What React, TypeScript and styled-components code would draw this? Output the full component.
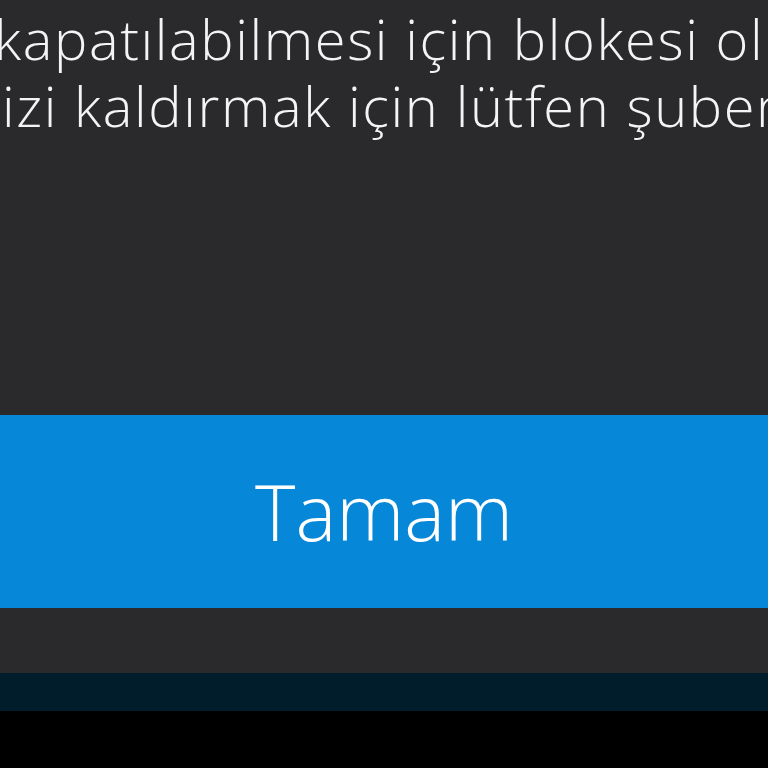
import React from "react";
import styled, { createGlobalStyle } from "styled-components";

const Global = createGlobalStyle`
  html, body { margin: 0; padding: 0; background: #000; overflow: hidden; }
  #root { width: 768px; height: 768px; }
`;

const Screen = styled.div`
  width: 768px;
  height: 768px;
  display: flex;
  flex-direction: column;
  background: #000;
  overflow: hidden;
  font-family: "Open Sans", "Noto Sans", sans-serif;
`;

const Dialog = styled.div`
  background: #2a292b;
  display: flex;
  flex-direction: column;
`;

const Message = styled.div`
  height: 415px;
  box-sizing: border-box;
  padding-top: 5px;
  display: flex;
  flex-direction: column;
  overflow: hidden;
`;

const Line = styled.div<{ $indent: number }>`
  color: #f4f4f4;
  font-weight: 350;
  font-size: 56px;
  letter-spacing: 1.6px;
  line-height: 67px;
  white-space: nowrap;
  text-indent: ${(p) => p.$indent}px;
`;

const OkButton = styled.button`
  height: 193px;
  width: 100%;
  border: none;
  margin: 0;
  padding: 0;
  background: #0787d8;
  color: #ffffff;
  font-family: "Open Sans", "Noto Sans", sans-serif;
  font-weight: 300;
  font-size: 77px;
  line-height: 1;
  display: flex;
  align-items: center;
  justify-content: center;
`;

const Footer = styled.div`
  height: 65px;
  background: #2a292b;
`;

const NavStrip = styled.div`
  height: 38px;
  background: #011c2b;
`;

const Black = styled.div`
  flex: 1;
  background: #000;
`;

export default function App() {
  return (
    <>
      <Global />
      <Screen>
        <Dialog>
          <Message>
            <Line $indent={-6}>kapatılabilmesi için blokesi olmaması gerekmektedir.</Line>
            <Line $indent={2}>izi kaldırmak için lütfen şubemize başvurunuz.</Line>
          </Message>
          <OkButton>Tamam</OkButton>
          <Footer />
        </Dialog>
        <NavStrip />
        <Black />
      </Screen>
    </>
  );
}
